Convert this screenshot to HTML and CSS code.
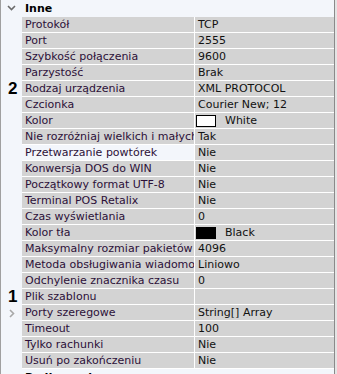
FILE: index.html
```html
<!DOCTYPE html>
<html lang="pl">
<head>
    <meta charset="UTF-8">
    <meta name="viewport" content="width=device-width, initial-scale=1.0">
    <title>Właściwości</title>
    <link rel="stylesheet" href="styles.css">
</head>
<body>
    <div class="grid">
        <div class="category">
            <div class="gutter">
                <svg class="chev" width="9" height="6" viewBox="0 0 9 6"><polyline points="1,1 4.5,4.5 8,1" fill="none" stroke="#6b6b6b" stroke-width="1.6"/></svg>
            </div>
            <div class="cat-name">Inne</div>
        </div>

        <div class="row"><div class="gutter"></div><div class="name">Protokół</div><div class="value">TCP</div></div>
        <div class="row"><div class="gutter"></div><div class="name">Port</div><div class="value">2555</div></div>
        <div class="row"><div class="gutter"></div><div class="name">Szybkość połączenia</div><div class="value">9600</div></div>
        <div class="row"><div class="gutter"></div><div class="name">Parzystość</div><div class="value">Brak</div></div>
        <div class="row"><div class="gutter"><span class="mark">2</span></div><div class="name">Rodzaj urządzenia</div><div class="value">XML PROTOCOL</div></div>
        <div class="row"><div class="gutter"></div><div class="name">Czcionka</div><div class="value">Courier New; 12</div></div>
        <div class="row"><div class="gutter"></div><div class="name">Kolor</div><div class="value"><span class="swatch white"></span>White</div></div>
        <div class="row"><div class="gutter"></div><div class="name">Nie rozróżniaj wielkich i małych liter</div><div class="value">Tak</div></div>
        <div class="row selected"><div class="gutter"></div><div class="name">Przetwarzanie powtórek</div><div class="value">Nie</div></div>
        <div class="row"><div class="gutter"></div><div class="name">Konwersja DOS do WIN</div><div class="value">Nie</div></div>
        <div class="row"><div class="gutter"></div><div class="name">Początkowy format UTF-8</div><div class="value">Nie</div></div>
        <div class="row"><div class="gutter"></div><div class="name">Terminal POS Retalix</div><div class="value">Nie</div></div>
        <div class="row"><div class="gutter"></div><div class="name">Czas wyświetlania</div><div class="value">0</div></div>
        <div class="row"><div class="gutter"></div><div class="name">Kolor tła</div><div class="value"><span class="swatch black"></span>Black</div></div>
        <div class="row"><div class="gutter"></div><div class="name">Maksymalny rozmiar pakietów</div><div class="value">4096</div></div>
        <div class="row"><div class="gutter"></div><div class="name">Metoda obsługiwania wiadomości</div><div class="value">Liniowo</div></div>
        <div class="row"><div class="gutter"></div><div class="name">Odchylenie znacznika czasu</div><div class="value">0</div></div>
        <div class="row"><div class="gutter"><span class="mark">1</span></div><div class="name">Plik szablonu</div><div class="value"></div></div>
        <div class="row"><div class="gutter">
            <svg class="expand" width="6" height="9" viewBox="0 0 6 9"><polyline points="1,1 4.5,4.5 1,8" fill="none" stroke="#a8a8a8" stroke-width="1.6"/></svg>
        </div><div class="name">Porty szeregowe</div><div class="value">String[] Array</div></div>
        <div class="row"><div class="gutter"></div><div class="name">Timeout</div><div class="value">100</div></div>
        <div class="row"><div class="gutter"></div><div class="name">Tylko rachunki</div><div class="value">Nie</div></div>
        <div class="row"><div class="gutter"></div><div class="name">Usuń po zakończeniu</div><div class="value">Nie</div></div>

        <div class="category">
            <div class="gutter"></div>
            <div class="cat-name">Podłączenie</div>
        </div>
    </div>
</body>
</html>
```

FILE: styles.css
```css
html, body { margin: 0; padding: 0; background: #e4e4e4; }
body {
    width: 337px;
    height: 374px;
    overflow: hidden;
    font-family: "DejaVu Sans", sans-serif;
    font-size: 11px;
}
.grid {
    width: 333px;
    height: 374px;
    background: #f3f6fb;
    border-left: 1px solid #a0a0a0;
    border-right: 1px solid #8a8a8a;
    overflow: hidden;
}
.category {
    display: flex;
    height: 17px;
    align-items: center;
}
.category .gutter { height: 17px; }
.cat-name {
    padding-left: 3px;
    font-weight: bold;
    color: #000;
    line-height: 17px;
}
.chev { display: block; margin: 0 0 1px 6px; }
.row {
    display: grid;
    grid-template-columns: 21px 173px 1fr;
    height: 16px;
}
.gutter {
    width: 21px;
    position: relative;
    display: flex;
    align-items: center;
}
.name, .value {
    background: #d3d3d3;
    border-bottom: 1px solid #fff;
    line-height: 15px;
    white-space: nowrap;
    overflow: hidden;
}
.name {
    border-right: 1px solid #fff;
    padding-left: 3px;
    color: #2c1038;
}
.value {
    padding-left: 3px;
    color: #111;
    display: flex;
    align-items: center;
}
.selected .name { background: #f3f6fb; }
.mark {
    font-family: "Liberation Sans", Arial, sans-serif;
    font-weight: bold;
    font-size: 17px;
    color: #000;
    margin-left: 7px;
    line-height: 16px;
}
.expand { display: block; margin-left: 8px; }
.swatch {
    display: inline-block;
    width: 18px;
    height: 10px;
    border: 1px solid #000;
    margin: 0 9px 0 -2px;
}
.swatch.white { background: #fff; }
.swatch.black { background: #000; }
```
